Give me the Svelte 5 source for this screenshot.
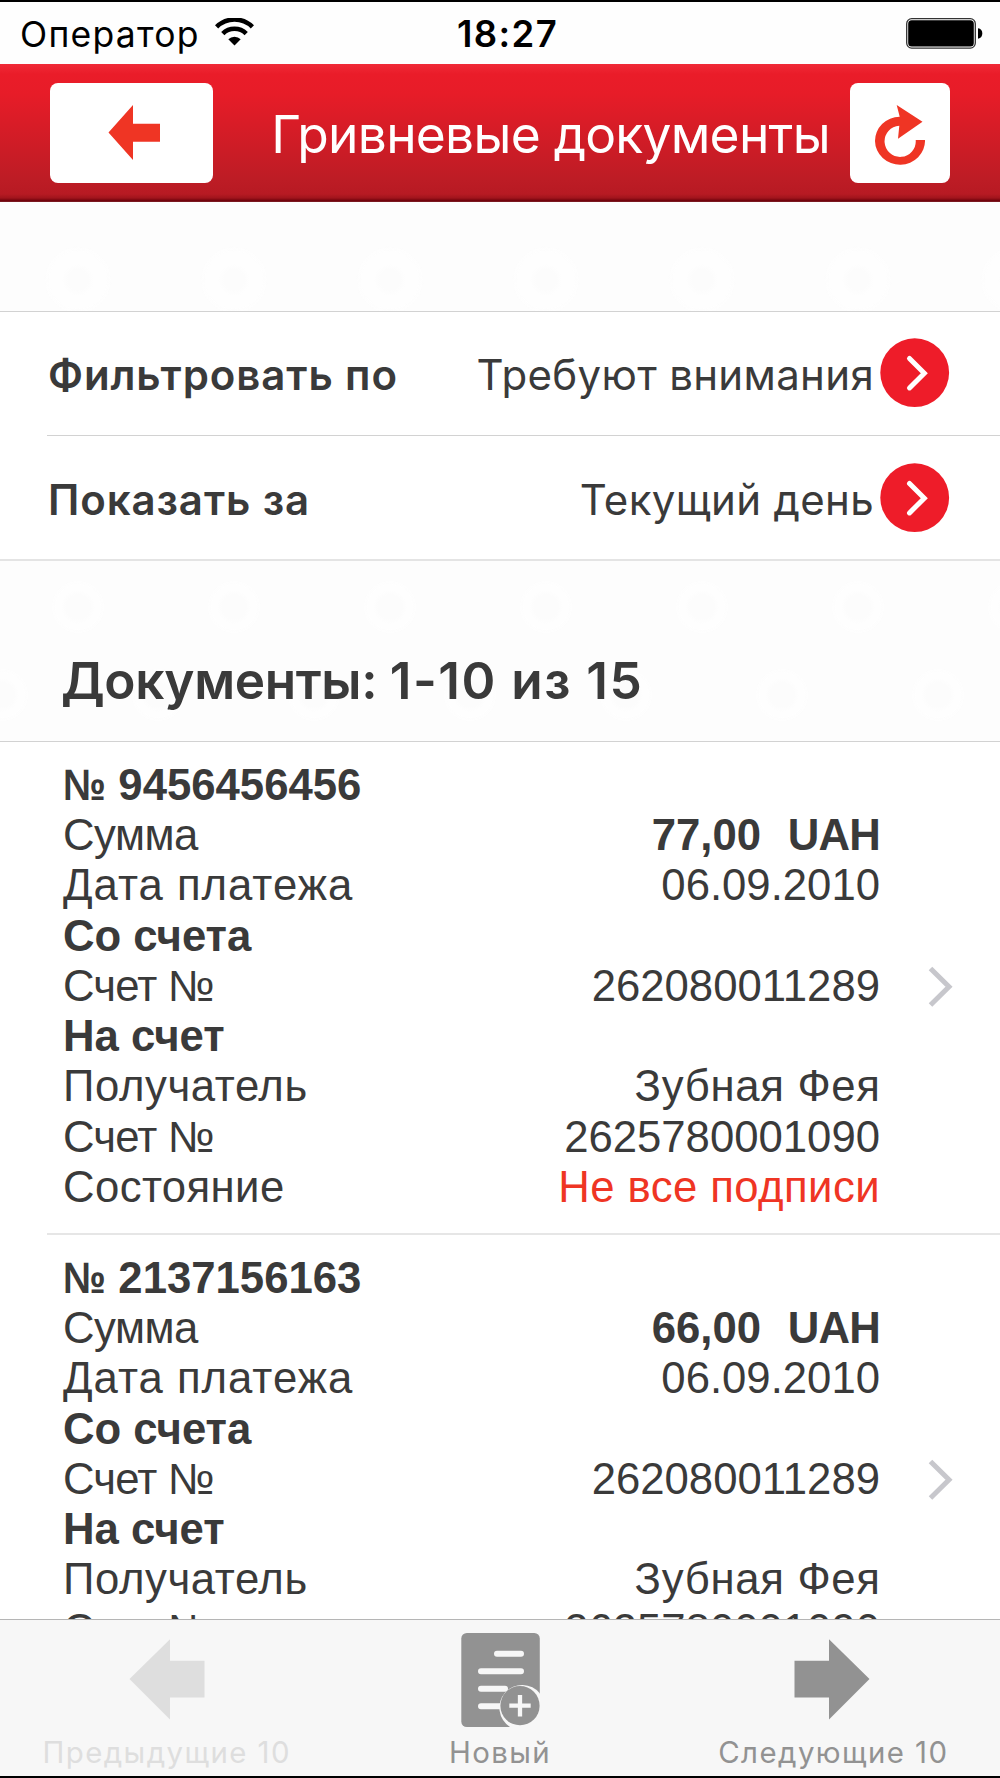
<script>
  const filters = [
    { label: 'Фильтровать по', value: 'Требуют внимания' },
    { label: 'Показать за', value: 'Текущий день' }
  ];

  const makeRows = (number, sum) => [
    { label: number, head: true, numbered: true },
    { label: 'Сумма', cls: 'sum', value: sum, currency: 'UAH' },
    { label: 'Дата платежа', cls: 'date', value: '06.09.2010' },
    { label: 'Со счета', head: true },
    { label: 'Счет №', cls: 'account', value: '262080011289' },
    { label: 'На счет', head: true },
    { label: 'Получатель', cls: 'payee', value: 'Зубная Фея', valueCls: 'person' },
    { label: 'Счет №', cls: 'account', value: '2625780001090' },
    { label: 'Состояние', cls: 'state', value: 'Не все подписи', valueCls: 'alert' }
  ];

  const documents = [makeRows('9456456456', '77,00'), makeRows('2137156163', '66,00')];
</script>

<div class="screen">
  <div class="status">
    <div class="carrier">
      <span class="operator">Оператор</span>
      <svg class="wifi" width="39" height="28" viewBox="0 0 39 28">
        <g fill="none" stroke="#000" stroke-width="4.6">
          <path d="M1.6 8.9a25.5 25.5 0 0 1 35.8 0" />
          <path d="M7.8 15.6a16.6 16.6 0 0 1 23.4 0" />
        </g>
        <path d="M19.5 27.5l-6.2-6.3a8.8 8.8 0 0 1 12.4 0z" />
      </svg>
    </div>
    <span class="time">18:27</span>
    <svg class="battery" width="77" height="31" viewBox="0 0 77 31">
      <rect x=".7" y=".7" width="68.6" height="29.4" rx="5" fill="#fff" stroke="#333" stroke-width="1.3" />
      <rect x="2.2" y="2.2" width="65.6" height="26.4" rx="3.5" />
      <path d="M72 10.3c3 .4 4.3 2.6 4.3 5.2s-1.3 4.8-4.3 5.2z" />
    </svg>
  </div>

  <header>
    <button class="back" aria-label="Назад">
      <svg width="52" height="56" viewBox="0 0 52 56"><path d="M.5 27.5L25 0v18.700h27v18H25V55z" fill="#ef3524" /></svg>
    </button>
    <h1>Гривневые документы</h1>
    <button class="refresh" aria-label="Обновить">
      <svg width="50" height="60" viewBox="0 0 50 60">
        <path d="M21.700 0L47.500 16.700 23 33.700l1.300-13A15.600 15.600 0 1 0 40.700 35H50a25 24 0 1 1-25.300-23.300z" fill="#ef3524" />
      </svg>
    </button>
  </header>

  <div class="spacer"></div>

  <div class="filters">
    {#each filters as f}
      <div class="filter">
        <span class="name">{f.label}</span>
        <span class="choice">{f.value}</span>
        <svg width="70" height="70" viewBox="0 0 70 70">
          <circle cx="34.700" cy="34.700" r="34.400" fill="#ee1c29" />
          <path d="M29.500 20.500l14.800 14.700-14.800 14.700" fill="none" stroke="#fff" stroke-width="5" stroke-linecap="round" />
        </svg>
      </div>
    {/each}
  </div>

  <div class="section"><h2>Документы: <span class="range">1-10 из 15</span></h2></div>

  <div class="list">
    {#each documents as rows}
      <div class="doc">
        <div class="rows">
          {#each rows as r}
            <div class="row" class:head={r.head}>
              <span class={r.cls}>{#if r.numbered}<span class="sign">№</span>&nbsp;{/if}{r.label}</span>
              {#if r.currency}
                <span class="strong">{r.value}&nbsp; <span class="currency">{r.currency}</span></span>
              {:else if r.value}
                <span class={r.valueCls}>{r.value}</span>
              {/if}
            </div>
          {/each}
        </div>
        <svg class="more" width="25" height="42" viewBox="0 0 25 42">
          <path d="M2.500 2.500L21 20.800 2.500 39" fill="none" stroke="#c7c7cc" stroke-width="5" />
        </svg>
      </div>
    {/each}
  </div>

  <nav>
    <div class="tab off">
      <svg width="76" height="94" viewBox="0 0 76 94"><path d="M.5 46L41 6.200v21.600h34.500v36.700H41v22z" /></svg>
      <span>Предыдущие 10</span>
    </div>
    <div class="tab">
      <svg class="sheet" width="79" height="94" viewBox="0 0 79 94">
        <rect x=".3" width="78.500" height="94" rx="5.500" />
        <path d="M36 20.700h24M20 38.300h40M20 55.700h24M20 73.300h24" fill="none" stroke="#f7f7f7" stroke-width="6" stroke-linecap="round" />
        <path d="M79 94V60.500A22.800 22.800 0 1 0 49 94z" fill="#f7f7f7" />
        <circle cx="59" cy="72.700" r="19.600" />
        <path d="M59 62v21.400M48.300 72.700h21.400" stroke="#f7f7f7" stroke-width="4.300" />
      </svg>
      <span>Новый</span>
    </div>
    <div class="tab">
      <svg class="forward" width="76" height="94" viewBox="0 0 76 94"><path d="M75.500 46L35 6.200v21.600H.5v36.700H35v22z" /></svg>
      <span>Следующие 10</span>
    </div>
  </nav>
</div>

<style>
  :global(body) { margin: 0; background: #fff; }
  * { box-sizing: border-box; }
  .screen {
    width: 1000px; height: 1778px; overflow: hidden;
    display: flex; flex-direction: column;
    font-family: Inter, "Noto Sans", sans-serif; color: #3a3a3a; background: #fefefe;
    border-top: 2px solid #000; border-bottom: 2px solid #000;
  }
  .status {
    height: 62px; flex: none; display: grid; grid-template-columns: 1fr auto 1fr;
    align-items: start; color: #000; padding: 0 17px 0 20px;
  }
  .carrier { display: flex; gap: 15px; }
  .operator { font-size: 35.500px; line-height: 65px; letter-spacing: 1.250px; }
  .wifi { margin-top: 16px; }
  .time { font-size: 36.500px; line-height: 65px; font-weight: 600; letter-spacing: 1.400px; margin-left: 12px; }
  .battery { justify-self: end; margin-top: 16px; }

  header {
    height: 138px; flex: none; display: flex; align-items: flex-start; padding: 19px 50px 0;
    background: linear-gradient(#f02a37 0, #ea1c29 10px, #e71c28 30px, #bd1c25 116px, #b71a23 130px, #a0141c 134px, #6a000a 137px, #8a3037 138px);
  }
  button { border: 0; padding: 0; background: #fff; border-radius: 8px; height: 100px; flex: none; display: flex; }
  .back { width: 163px; padding: 22px 0 0 58px; }
  .refresh { width: 100px; padding: 22px 0 0 25px; }
  h1 {
    margin: 0; padding-left: 38px; flex: 1; text-align: center; white-space: nowrap; color: #fff;
    font-size: 51.500px; line-height: 102px; font-weight: 400; letter-spacing: -.750px;
  }

  .spacer {
    height: 109px; flex: none;
    background: radial-gradient(circle at 78px 78px, #fcfcfc 0 10px, #fefefe 16px 28px, transparent 34px) 0 0 / 156px 156px, #fdfdfd;
  }
  .filters { flex: none; background: #fff; border-top: 1px solid #d2d2d2; border-bottom: 2px solid #e4e4e4; }
  .filter { display: flex; align-items: center; height: 123px; margin-left: 47px; padding-right: 50px; }
  .filter + .filter { border-top: 1px solid #d2d2d2; height: 124px; padding-top: 2px; }
  .filter svg { flex: none; margin: -1px 0 0 6px; }
  .name { font-size: 42px; font-weight: 600; line-height: 60px; letter-spacing: .900px; margin: 2px 0 0 1px; }
  .choice { font-size: 42px; line-height: 60px; margin: 2px 0 0 auto; letter-spacing: .320px; }

  .section {
    height: 181px; flex: none; border-bottom: 1px solid #d2d2d2; padding: 89px 61px 0;
    background:
      radial-gradient(circle at 78px 46px, #fcfcfc 0 12px, #fefefe 17px 22px, transparent 27px) 0 0 / 156px 181px,
      radial-gradient(circle at 78px 134px, #fcfcfc 0 12px, #fefefe 17px 22px, transparent 27px) -76px 0 / 156px 181px,
      #fdfdfd;
  }
  h2 { margin: 0; font-size: 51.300px; line-height: 60px; font-weight: 600; white-space: nowrap; letter-spacing: -.350px; }
  .range { letter-spacing: 1.500px; }

  .list { flex: 1; min-height: 0; overflow: hidden; background: #fff; font-family: "Liberation Sans", Arial, sans-serif; font-size: 43.700px; }
  .doc { display: flex; align-items: center; height: 493px; margin-left: 47px; padding: 17px 47px 20px 16px; border-bottom: 2px solid #e6e6e6; }
  .rows { flex: 1; }
  .row { display: flex; justify-content: space-between; height: 50.330px; line-height: 50.330px; white-space: pre; }
  .head, .strong { font-weight: 700; }
  .sign { display: inline-block; transform: scaleX(.88); transform-origin: left; margin-right: -5.500px; }
  .currency { letter-spacing: -.800px; margin-left: 2.400px; }
  .sum { letter-spacing: -.500px; }
  .date { letter-spacing: 1px; }
  .account { letter-spacing: -.800px; }
  .payee { letter-spacing: .600px; }
  .state { letter-spacing: .400px; }
  .person { letter-spacing: .700px; margin-right: -.700px; }
  .alert { color: #ef3524; letter-spacing: .420px; }
  .more { margin: 2px 0 0 48px; }

  nav {
    height: 157px; flex: none; display: grid; grid-template-columns: repeat(3, 1fr);
    border-top: 1px solid #b5b5b5; background: #f7f7f7; color: #929292; font-size: 29.400px;
  }
  .tab { display: flex; flex-direction: column; align-items: center; padding-top: 13px; }
  .tab svg { fill: currentColor; flex: none; }
  .tab .sheet { margin-left: 2px; }
  .tab .forward { margin-right: 2px; }
  .tab span { line-height: 36px; margin-top: 8px; white-space: nowrap; letter-spacing: 1.420px; }
  .off { color: #dedede; }
</style>
